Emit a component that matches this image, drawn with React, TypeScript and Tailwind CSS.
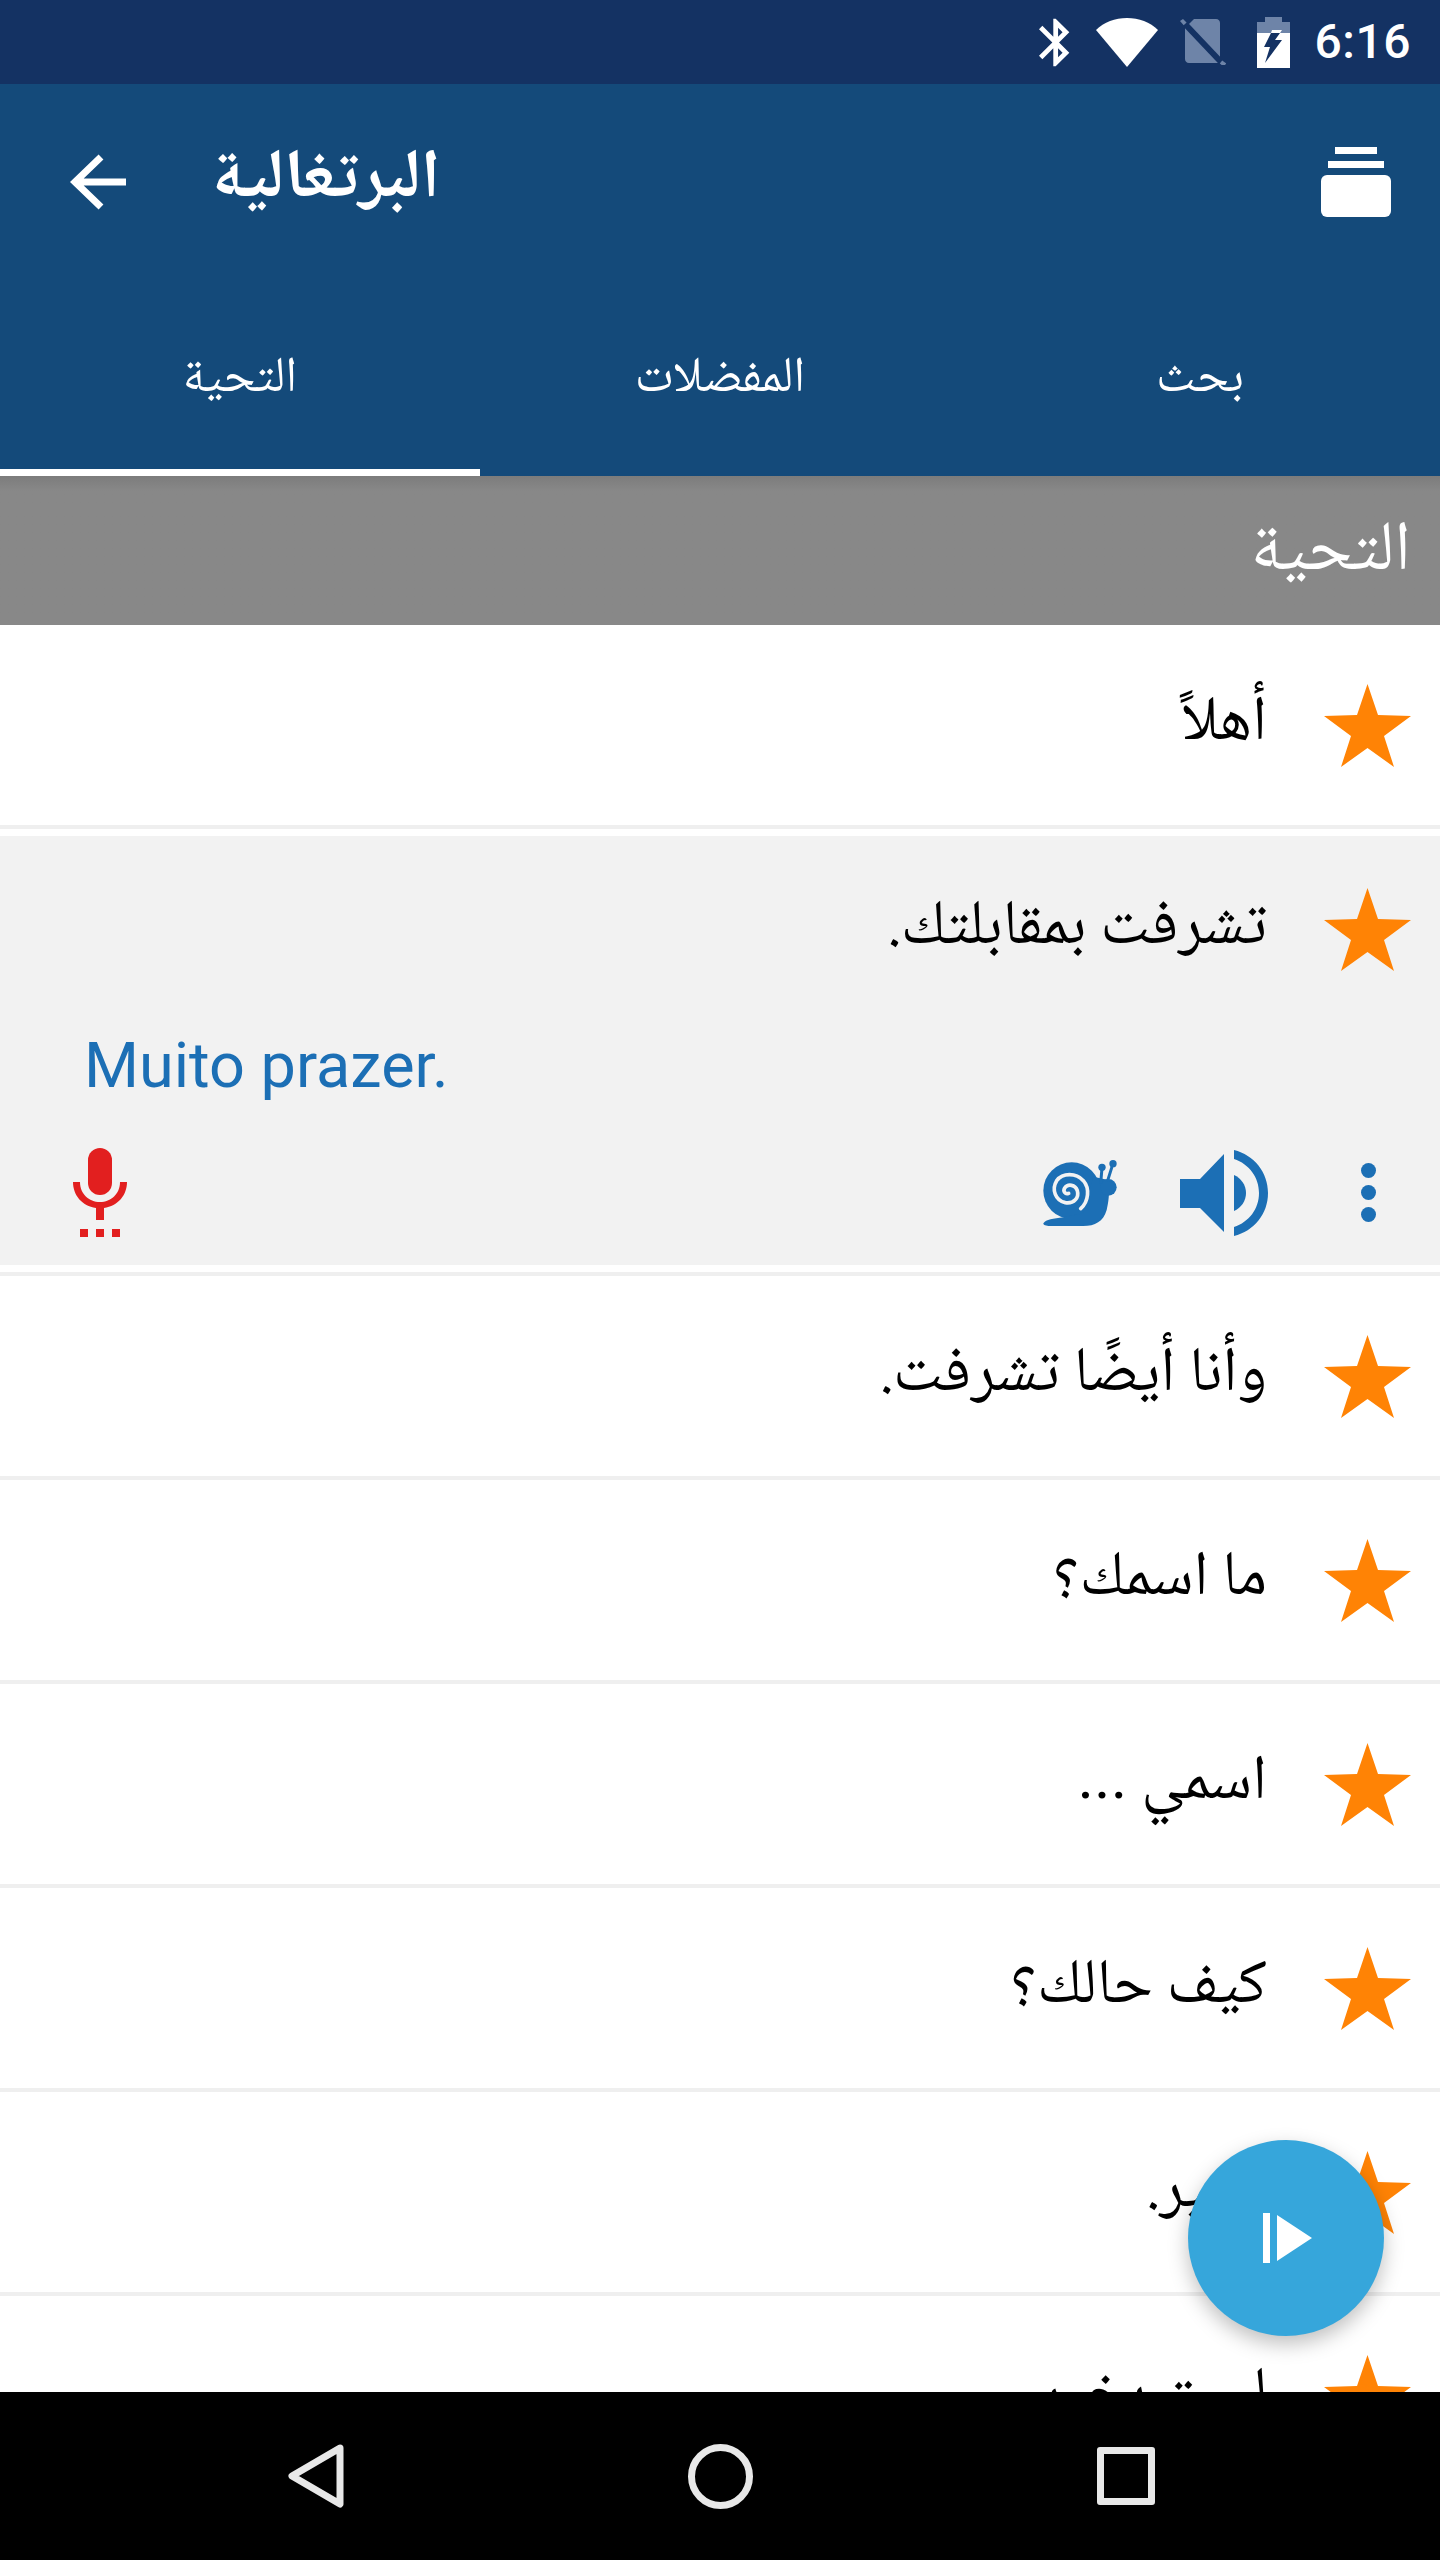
import type { ReactNode } from "react";

const arabic = "font-['Noto_Naskh_Arabic','DejaVu_Sans',sans-serif]";

function Star() {
  return (
    <svg viewBox="0 0 87 83" className="w-[87px] h-[83px] shrink-0" fill="#ff8305">
      <path d="M43.500 0L54 31l33 1-27 20 10 31-26.500-19L17 83l10-31L0 32l33-1z" />
    </svg>
  );
}

function Row({ text }: { text: ReactNode }) {
  return (
    <div className="h-[204px] shrink-0 bg-white border-b-[4px] border-[#efefef] flex items-center justify-end pr-[29px]">
      <div className={`${arabic} text-[63px] leading-none text-black mr-[57px]`} dir="rtl">
        {text}
      </div>
      <Star />
    </div>
  );
}

function StatusBar() {
  return (
    <div className="h-[84px] shrink-0 bg-[#143263] flex items-center justify-end pr-[29px] text-white">
      <svg viewBox="5 2 13 20" className="w-[31px] h-[49px] mr-[26px]" fill="#fff">
        <path d="M17.710 7.710L12 2h-1v7.590L6.410 5 5 6.410 10.590 12 5 17.590 6.410 19 11 14.410V22h1l5.710-5.710-4.300-4.290 4.300-4.290zM13 5.830l1.880 1.880L13 9.590V5.830zm1.880 10.460L13 18.170v-3.760l1.880 1.880z" />
      </svg>
      <svg viewBox="0 0 62 49" className="w-[62px] h-[49px] mr-[22px]" fill="#fff">
        <path d="M31 49L0 12C8 4 19 0 31 0s23 4 31 12z" />
      </svg>
      <svg viewBox="0 0 46 46" className="w-[46px] h-[46px] mr-[31px]">
        <path d="M14 0h22c2.500 0 4 2 4 4v40H9c-2.500 0-4-2-4-4V9z" fill="#6e84a8" />
        <path d="M0 2L3 0l7 7-3 3z" fill="#6e84a8" />
        <path d="M5 5l36 38" stroke="#143263" strokeWidth="6" fill="none" />
        <path d="M41 43l4 3" stroke="#6e84a8" strokeWidth="4" fill="none" />
      </svg>
      <svg viewBox="0 0 33 51" className="w-[33px] h-[51px] mr-[25px]">
        <path d="M8 0h17v5h8v12H0V5h8z" fill="#6e84a8" />
        <path d="M0 16h33v35H0z" fill="#fff" />
        <path d="M14 16h9l-5 7h7L8 46l5-16H7z" fill="#143263" />
        <path d="M15 13h10l-2 3h-9z" fill="#fff" />
      </svg>
      <span className="font-['Roboto'] font-medium text-[48px] leading-none tracking-[0.5px]">6:16</span>
    </div>
  );
}

function Toolbar() {
  return (
    <div className="h-[392px] shrink-0 bg-[#144a7a] flex flex-col text-white">
      <div className="h-[196px] shrink-0 flex items-center pl-[70px] pr-[49px]">
        <svg viewBox="0 0 56 56" className="w-[56px] h-[56px] mr-[86px]" fill="none" stroke="#fff" strokeWidth="7">
          <path d="M56 28H5M31 3L5 28l26 25" />
        </svg>
        <div className={`${arabic} font-bold text-[69px] leading-none`} dir="rtl">
          البرتغالية
        </div>
        <div className="ml-auto w-[70px] flex flex-col items-center gap-[7px]">
          <div className="w-[42px] h-[7px] bg-white" />
          <div className="w-[56px] h-[7px] bg-white" />
          <div className="w-[70px] h-[42px] bg-white rounded-[6px]" />
        </div>
      </div>
      <div className={`${arabic} flex-1 flex items-stretch text-[50px]`}>
        {["التحية", "المفضلات", "بحث"].map((tab, i) => (
          <div
            key={tab}
            dir="rtl"
            className={`w-[480px] flex items-center justify-center pt-[12px] border-b-[7px] ${i === 0 ? "border-white" : "border-transparent"}`}
          >
            {tab}
          </div>
        ))}
      </div>
    </div>
  );
}

function ExpandedRow() {
  return (
    <div className="shrink-0 bg-white border-b-[4px] border-[#efefef] pt-[7px] pb-[7px] h-[447px]">
      <div className="h-[429px] bg-[#f2f2f2] flex flex-col">
        <div className="h-[187px] flex items-center justify-end pr-[29px] shrink-0">
          <div className={`${arabic} text-[63px] leading-none text-black mr-[57px]`} dir="rtl">
            تشرفت بمقابلتك.
          </div>
          <Star />
        </div>
        <div className="h-[125px] pl-[84px] pt-[8px] font-['Roboto'] text-[63px] leading-[70px] text-[#1c6fb5] shrink-0">
          Muito prazer.
        </div>
        <div className="flex items-center pl-[73px] pr-[64px]">
          <svg viewBox="0 0 54 89" className="w-[54px] h-[89px]" fill="#e21f1f">
            <rect x="15" y="0" width="24" height="47" rx="12" />
            <path d="M0 34h7c0 12 9 20 20 20s20-8 20-20h7c0 13-9 24-23 26v12h-8V60C9 58 0 47 0 34z" />
            <path d="M7 81h8v8H7zM23 81h8v8h-8zM39 81h8v8h-8z" />
          </svg>
          <svg viewBox="0 0 220 198" className="w-[74px] h-[66px] ml-auto mr-[63px]" fill="#1c6fb5">
            <circle cx="85" cy="92" r="85" />
            <path d="M0 190C8 178 30 176 60 172L120 160 150 50 195 60C200 100 195 130 190 150 180 185 155 198 120 198H20C8 198 0 196 0 190z" />
            <circle cx="195" cy="82" r="25" />
            <path d="M172 70L176 24M192 65L208 14" stroke="#1c6fb5" strokeWidth="9" fill="none" />
            <circle cx="176" cy="22" r="11" />
            <circle cx="209" cy="11" r="11" />
            <path
              d="M112 146C136 125 140 85 120 62 98 38 58 38 40 62 24 88 36 122 66 128 92 132 108 112 102 92 96 74 74 70 64 84 58 94 66 104 76 100"
              stroke="#f2f2f2"
              strokeWidth="11"
              strokeLinecap="round"
              fill="none"
            />
          </svg>
          <svg viewBox="0 0 88 86" className="w-[88px] h-[86px] mr-[93px]" fill="#1c6fb5">
            <path d="M0 29h20L44 4v78L20 58H0z" />
            <path d="M54 0c20 5 34 22 34 43S74 81 54 86v-9c15-5 25-18 25-34S69 14 54 9z" />
            <path d="M54 25c7 3 12 10 12 18s-5 15-12 18z" />
          </svg>
          <div className="w-[15px] flex flex-col gap-[7px]">
            <div className="w-[15px] h-[15px] rounded-full bg-[#1c6fb5]" />
            <div className="w-[15px] h-[15px] rounded-full bg-[#1c6fb5]" />
            <div className="w-[15px] h-[15px] rounded-full bg-[#1c6fb5]" />
          </div>
        </div>
      </div>
    </div>
  );
}

function NavBar() {
  return (
    <div className="h-[168px] shrink-0 bg-black flex items-center justify-between pl-[288px] pr-[285px] relative z-10">
      <svg viewBox="0 0 56 64" className="w-[56px] h-[64px]" fill="none" stroke="#e8e8e8" strokeWidth="7" strokeLinejoin="round">
        <path d="M52 4L4 32l48 28z" />
      </svg>
      <div className="w-[65px] h-[65px] rounded-full border-[7px] border-[#e8e8e8]" />
      <div className="w-[58px] h-[58px] rounded-[3px] border-[7px] border-[#e8e8e8]" />
    </div>
  );
}

export default function App() {
  const rows: ReactNode[] = [
    "وأنا أيضًا تشرفت.",
    "ما اسمك؟",
    <>
      اسمي <span className="font-['Roboto'] leading-[0]">...</span>
    </>,
    "كيف حالك؟",
    "بخير.",
    "لست بخير.",
  ];
  return (
    <div className="relative w-[1440px] h-[2560px] overflow-hidden flex flex-col bg-white font-['Roboto']">
      <StatusBar />
      <Toolbar />
      <div className="h-[149px] shrink-0 bg-gradient-to-b from-[#7c7c7c] via-[#888888] via-10% to-[#888888] flex items-center justify-end pr-[29px]">
        <div className={`${arabic} text-[70px] leading-none text-white mt-[6px]`} dir="rtl">
          التحية
        </div>
      </div>
      <div className="flex-1 min-h-0 overflow-hidden flex flex-col">
        <Row text="أهلاً" />
        <ExpandedRow />
        {rows.map((r, i) => (
          <Row key={i} text={r} />
        ))}
      </div>
      <NavBar />
      <div className="absolute left-[1188px] top-[2140px] w-[196px] h-[196px] rounded-full bg-[#36a6db] shadow-[0_8px_20px_rgba(0,0,0,0.25)] flex items-center justify-center">
        <svg viewBox="0 0 49 50" className="w-[49px] h-[50px] ml-[3px]" fill="#fff">
          <path d="M0 0h7v50H0zM14 2l35 23-35 23z" />
        </svg>
      </div>
    </div>
  );
}
